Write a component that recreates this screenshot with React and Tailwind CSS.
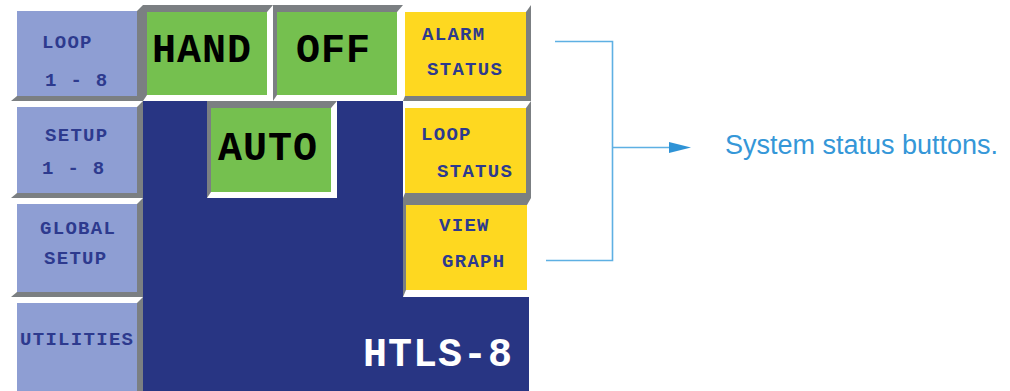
import React from 'react';

const mono = "font-['Liberation_Mono',monospace] font-bold";

// raised: light top/left, grey bottom/right; pressed: the other way round
const raised =
  'border-t-[6px] border-l-[6px] border-r-[6px] border-b-[5px] border-t-white border-l-white border-r-[#7b7f82] border-b-[#7b7f82]';
const pressed =
  'border-t-[7px] border-l-[4px] border-r-[6px] border-b-[6px] border-t-[#7b7f82] border-l-[#7b7f82] border-r-white border-b-white';
const raisedYellow =
  'border-t-[7px] border-l-[2px] border-r-[5px] border-b-[5px] border-t-white border-l-white border-r-[#7b7f82] border-b-[#7b7f82]';
const pressedYellow =
  'border-t-[7px] border-l-[3px] border-r-[4px] border-b-[7px] border-t-[#7b7f82] border-l-[#7b7f82] border-r-white border-b-white';

function Line({ className, children }) {
  return (
    <div className={`${mono} text-[19px] leading-none tracking-[1.3px] whitespace-pre text-[#2d3a8e] ${className}`}>
      {children}
    </div>
  );
}

function BigLabel({ children, className = '' }) {
  return (
    <div className={`${mono} text-[40px] leading-none tracking-[1px] text-black ${className}`}>{children}</div>
  );
}

export default function App() {
  return (
    <div className="w-[1010px] h-[391px] overflow-hidden bg-white flex">
      {/* touch screen */}
      <div className="ml-[11px] mt-[5px] shrink-0 grid grid-cols-[132px_260px_128px] grid-rows-[96px_97px_99px_99px]">
        {/* row 1 */}
        <div className={`bg-[#8e9ed3] flex flex-col ${raised}`}>
          <Line className="mt-[23px] ml-[25px]">LOOP</Line>
          <Line className="mt-[19px] ml-[28px]">1 - 8</Line>
        </div>
        <div className="flex">
          <div className={`w-[130px] bg-[#75c04f] flex items-center justify-center pr-[10px] pb-[3px] ${pressed}`}>
            <BigLabel>HAND</BigLabel>
          </div>
          <div className={`w-[130px] bg-[#75c04f] flex items-center justify-center pr-[7px] pb-[3px] ${pressed}`}>
            <BigLabel>OFF</BigLabel>
          </div>
        </div>
        <div className={`bg-[#fed820] flex flex-col ${raisedYellow}`}>
          <Line className="mt-[14px] ml-[17px]">ALARM</Line>
          <Line className="mt-[16px] ml-[22px]">STATUS</Line>
        </div>

        {/* row 2 */}
        <div className={`bg-[#8e9ed3] flex flex-col ${raised}`}>
          <Line className="mt-[20px] ml-[28px]">SETUP</Line>
          <Line className="mt-[14px] ml-[25px]">1 - 8</Line>
        </div>
        <div className="row-span-2 bg-[#283583] flex flex-col">
          <div className={`ml-[64px] w-[130px] h-[97px] bg-[#75c04f] flex items-center justify-center pr-[6px] pb-[1px] ${pressed}`}>
            <BigLabel>AUTO</BigLabel>
          </div>
        </div>
        <div className={`bg-[#fed820] flex flex-col ${raisedYellow}`}>
          <Line className="mt-[18px] ml-[16px]">LOOP</Line>
          <Line className="mt-[18px] ml-[32px]">STATUS</Line>
        </div>

        {/* row 3 */}
        <div className={`bg-[#8e9ed3] flex flex-col ${raised}`}>
          <Line className="mt-[16px] ml-[23px]">GLOBAL</Line>
          <Line className="mt-[11px] ml-[27px]">SETUP</Line>
        </div>
        <div className={`bg-[#fed820] flex flex-col ${pressedYellow}`}>
          <Line className="mt-[12px] ml-[33px]">VIEW</Line>
          <Line className="mt-[17px] ml-[36px]">GRAPH</Line>
        </div>

        {/* row 4 */}
        <div className={`bg-[#8e9ed3] flex flex-col ${raised}`}>
          <Line className="mt-[28px] ml-[3px]">UTILITIES</Line>
        </div>
        <div className="col-span-2 mr-[2px] bg-[#283583] flex justify-end items-start pt-[39px] pr-[16px]">
          <BigLabel className="text-white">HTLS-8</BigLabel>
        </div>
      </div>

      {/* callout */}
      <svg width="169" height="391" viewBox="0 0 169 391" className="shrink-0">
        <path d="M24 41.5H81.5V260.5H15" fill="none" stroke="#5eb0e3" strokeWidth="1.6" />
        <path d="M81.5 147.5H140" fill="none" stroke="#5eb0e3" strokeWidth="1.6" />
        <polygon points="138,142 160,147.5 138,153" fill="#2f93d6" />
      </svg>
      <div className="ml-[25px] mt-[132px] font-['Liberation_Sans',Arial,sans-serif] text-[27px] leading-none text-[#3597d8] whitespace-nowrap">
        System status buttons.
      </div>
    </div>
  );
}
